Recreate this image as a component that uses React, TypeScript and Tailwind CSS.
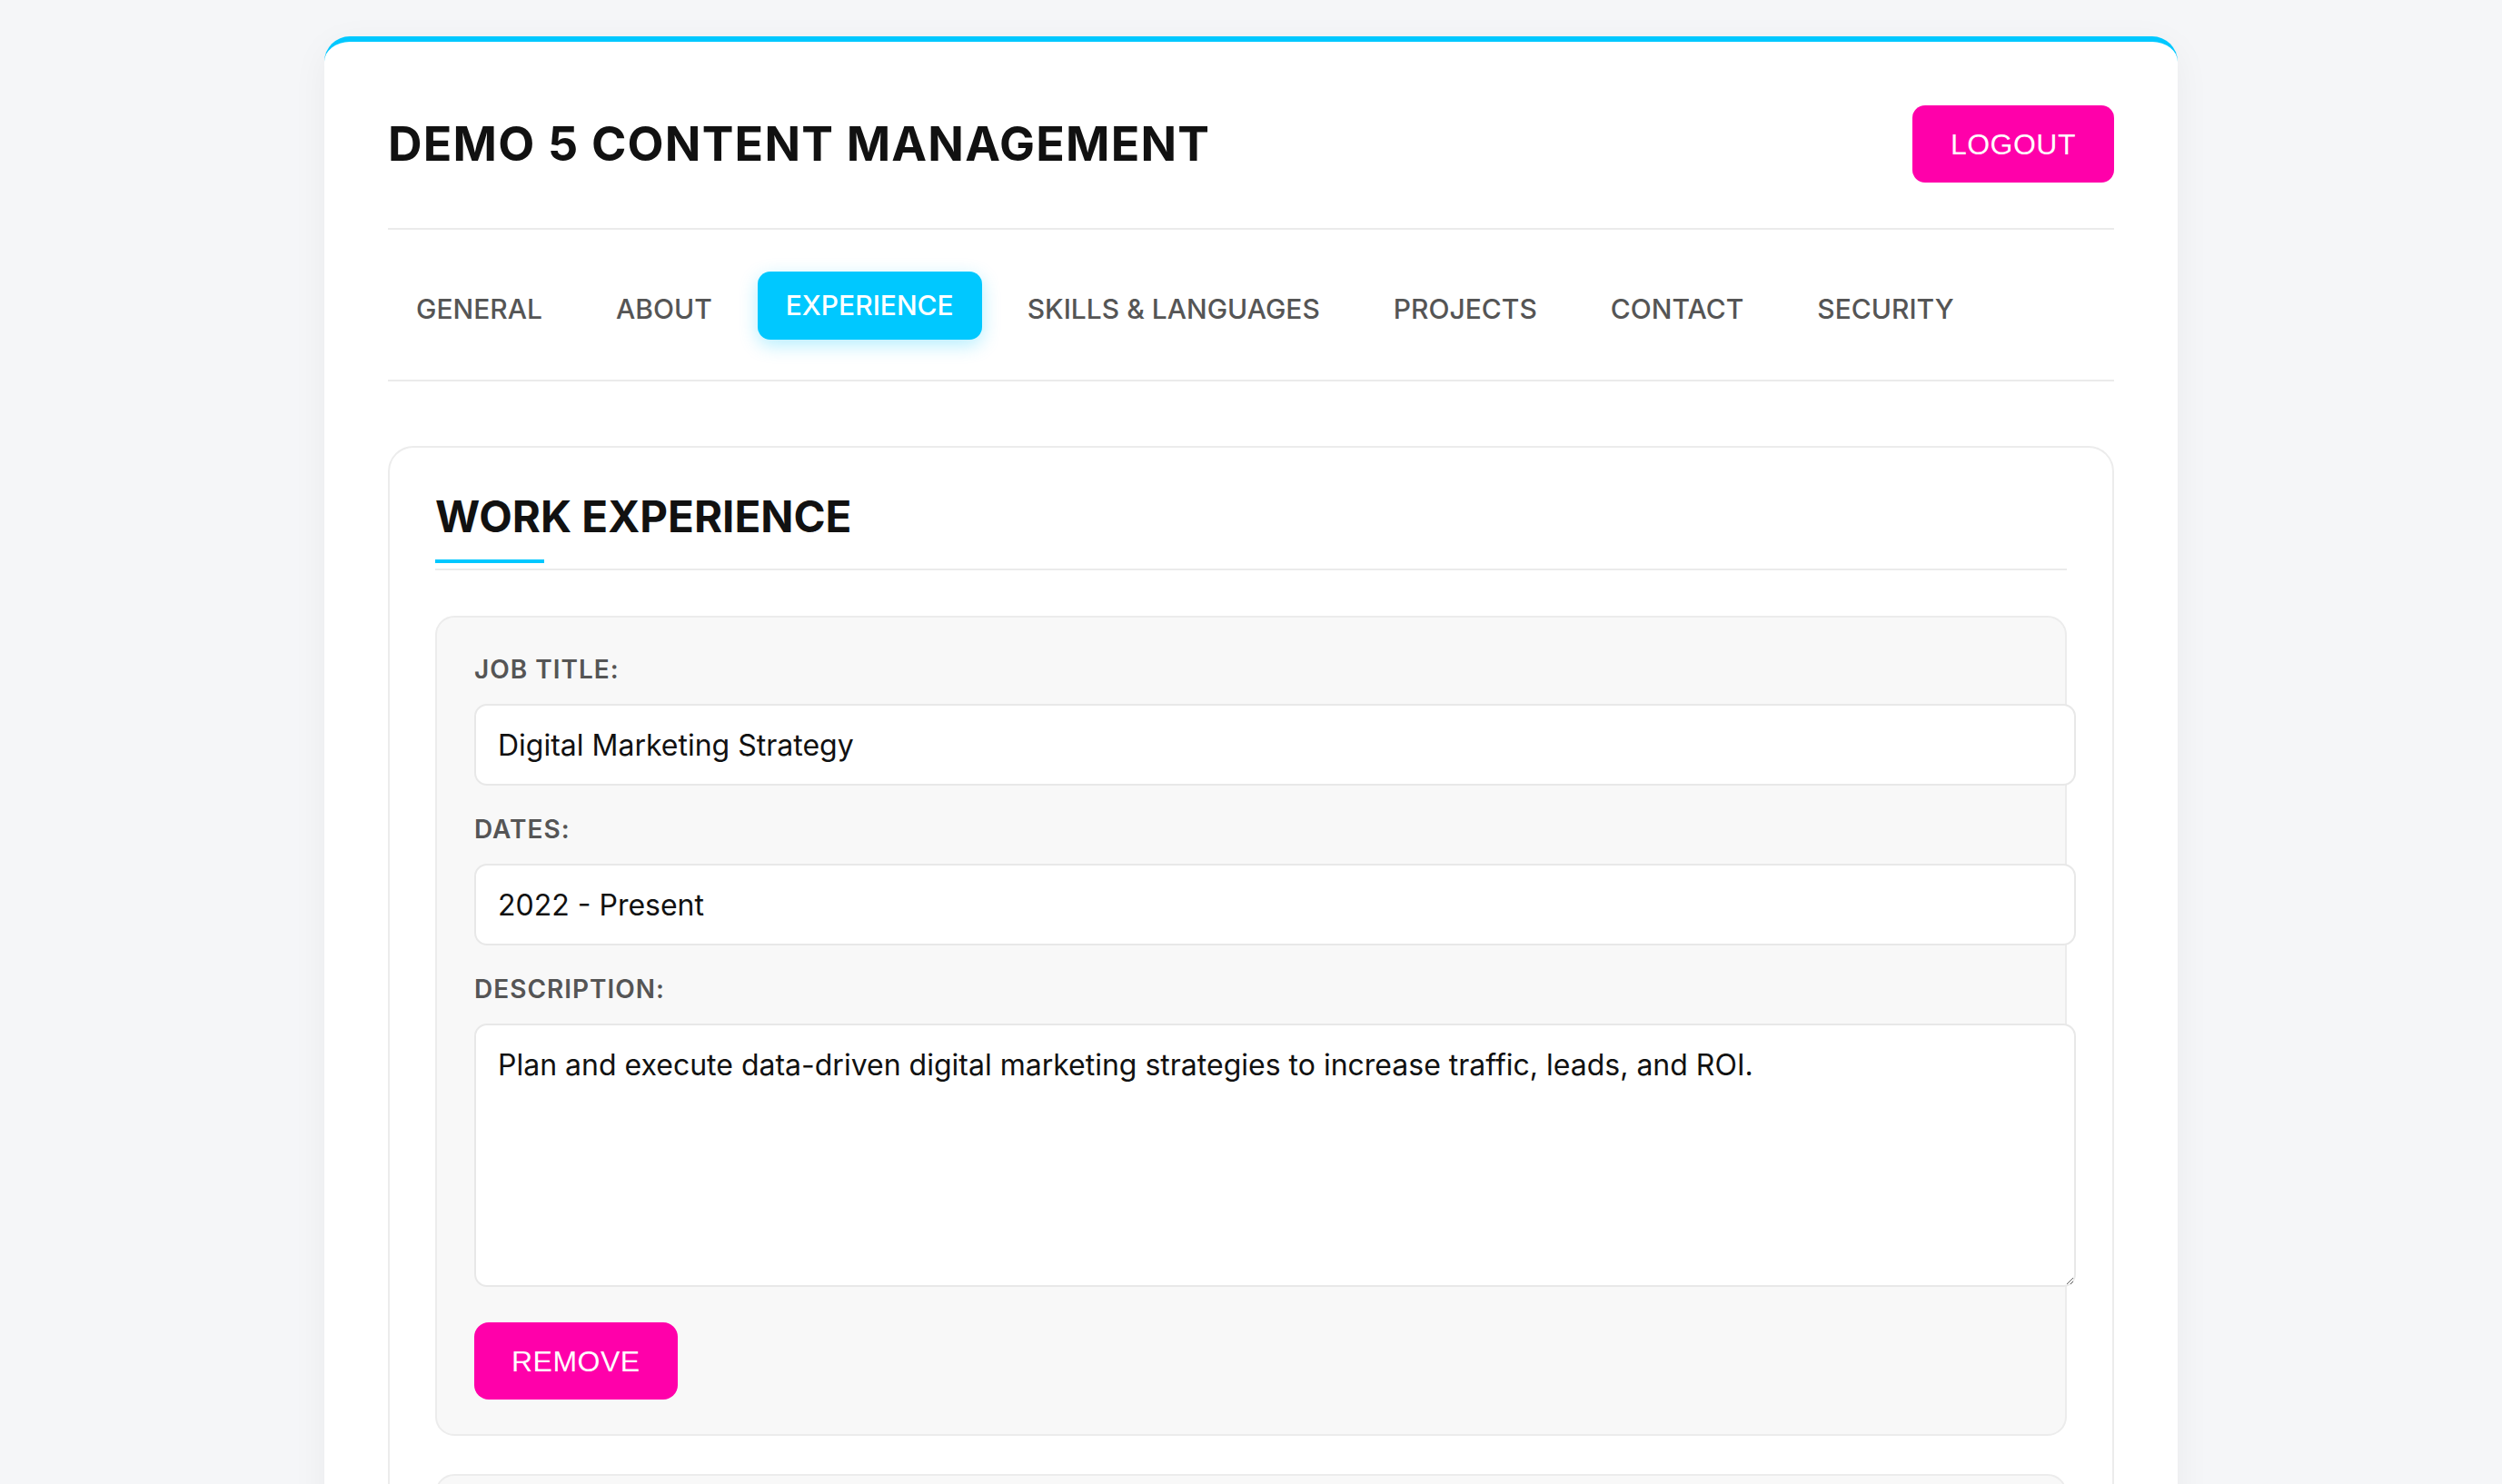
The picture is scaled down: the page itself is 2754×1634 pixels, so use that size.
import React from "react";

const tabs = ["GENERAL", "ABOUT", "EXPERIENCE", "SKILLS & LANGUAGES", "PROJECTS", "CONTACT", "SECURITY"];

type Entry = { title: string; dates: string; description: string };

const entries: Entry[] = [
  {
    title: "Digital Marketing Strategy",
    dates: "2022 - Present",
    description: "Plan and execute data-driven digital marketing strategies to increase traffic, leads, and ROI.",
  },
  {
    title: "Content Marketing Specialist",
    dates: "2019 - 2022",
    description: "Created and managed content campaigns across multiple channels.",
  },
];

function Label({ children, first }: { children: React.ReactNode; first?: boolean }) {
  return (
    <label
      className={`block text-[28px] leading-[42px] font-semibold tracking-[1px] text-[#555555] mb-[17px] ${
        first ? "" : "mt-[27px]"
      }`}
    >
      {children}
    </label>
  );
}

function EntryCard({ entry, first }: { entry: Entry; first: boolean }) {
  return (
    <div
      className={`border-2 border-[#ececec] bg-[#f8f8f8] rounded-[21px] pt-[36px] pl-[41px] pr-[41px] pb-[38px] ${
        first ? "" : "mt-[42px]"
      }`}
    >
      <Label first>JOB TITLE:</Label>
      <input
        readOnly
        defaultValue={entry.title}
        className="block w-[calc(100%+53px)] h-[90px] bg-white border-2 border-[#e8e8e8] rounded-[14px] px-[24px] text-[32px] text-[#111111] outline-none font-['Inter',sans-serif]"
      />
      <Label>DATES:</Label>
      <input
        readOnly
        defaultValue={entry.dates}
        className="block w-[calc(100%+53px)] h-[90px] bg-white border-2 border-[#e8e8e8] rounded-[14px] px-[24px] text-[32px] text-[#111111] outline-none font-['Inter',sans-serif]"
      />
      <Label>DESCRIPTION:</Label>
      <textarea
        readOnly
        defaultValue={entry.description}
        className="block w-[calc(100%+53px)] h-[290px] bg-white border-2 border-[#e8e8e8] rounded-[14px] px-[24px] pt-[20px] text-[32px] leading-[1.5] text-[#111111] outline-none font-['Inter',sans-serif]"
      />
      <button className="mt-[39px] h-[85px] px-[41px] rounded-[16px] bg-[#ff00aa] text-white text-[32px] tracking-[0.5px] font-['Liberation_Sans',Arial,sans-serif]">
        REMOVE
      </button>
    </div>
  );
}

export default function App() {
  return (
    <div className="min-h-screen bg-[#f5f6f8] pt-[40px] font-['Inter',sans-serif]">
      <div className="mx-auto w-[2040px] bg-white rounded-[28px] border-t-[6px] border-[#00c8ff] shadow-[0_10px_40px_rgba(0,0,0,0.05)] px-[70px] pt-[70px] pb-[70px]">
        <header className="flex items-center justify-between pb-[50px] border-b-2 border-[#ebebeb]">
          <h1 className="text-[52px] leading-none font-bold tracking-[1.2px] text-[#111111]">
            DEMO 5 CONTENT MANAGEMENT
          </h1>
          <button className="h-[85px] px-[42px] rounded-[14px] bg-[#ff00aa] text-white text-[32px] tracking-[0.5px] font-['Liberation_Sans',Arial,sans-serif]">
            LOGOUT
          </button>
        </header>

        <nav className="flex gap-[19px] pt-[50px] pb-[40px] border-b-2 border-[#ebebeb]">
          {tabs.map((t) =>
            t === "EXPERIENCE" ? (
              <div
                key={t}
                className="h-[75px] px-[31px] flex items-center rounded-[14px] bg-[#00c8ff] text-white text-[30px] font-medium -translate-y-[4px] shadow-[0_6px_20px_rgba(0,200,255,0.3)]"
              >
                {t}
              </div>
            ) : (
              <div
                key={t}
                className="h-[75px] px-[31px] flex items-center rounded-[14px] text-[#555555] text-[30px] font-medium"
              >
                {t}
              </div>
            )
          )}
        </nav>

        <section className="mt-[71px] border-2 border-[#ececec] rounded-[28px] p-[50px] bg-white">
          <h2 className="relative text-[47.5px] leading-[48px] pt-[2px] font-bold text-[#111111] pb-[33px] border-b-2 border-[#ebebeb]">
            WORK EXPERIENCE
            <span className="absolute left-0 bottom-[6px] w-[120px] h-[4px] bg-[#00c8ff]" />
          </h2>
          <div className="mt-[50px]">
            {entries.map((e, i) => (
              <EntryCard key={i} entry={e} first={i === 0} />
            ))}
          </div>
        </section>
      </div>
    </div>
  );
}
